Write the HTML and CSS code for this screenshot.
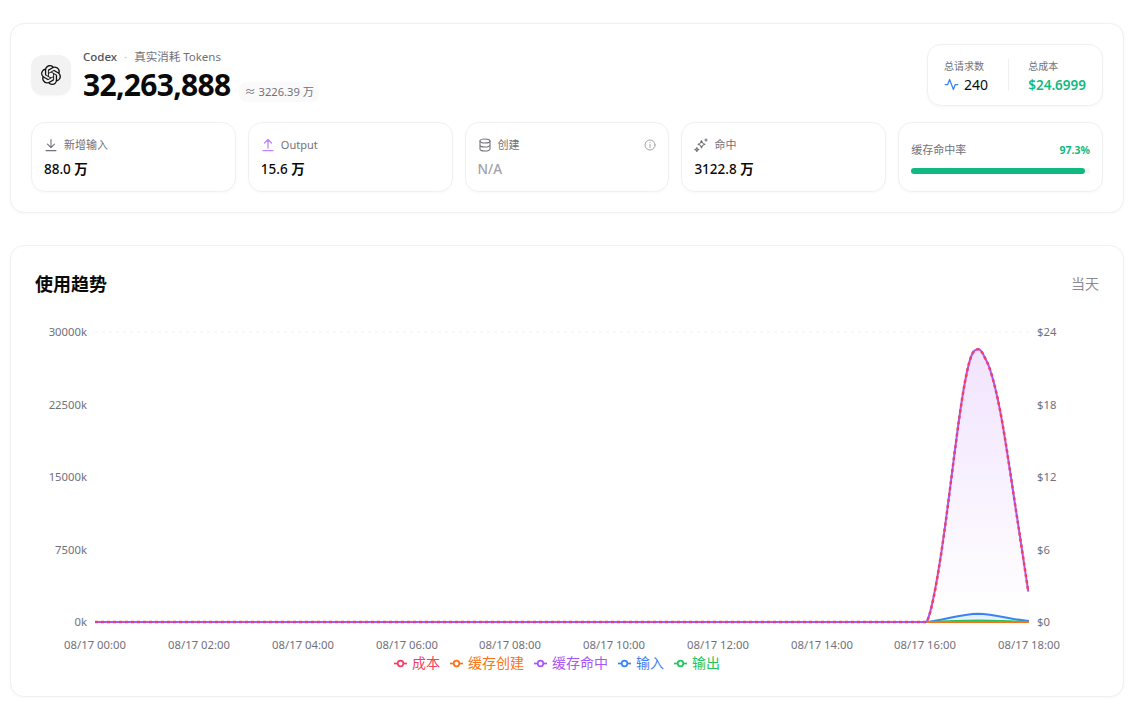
FILE: index.html
```html
<!DOCTYPE html>
<html lang="zh-CN">
<head>
    <meta charset="UTF-8">
    <meta name="viewport" content="width=device-width, initial-scale=1.0">
    <title>Codex 使用统计</title>
    <link rel="stylesheet" href="styles.css">
</head>
<body>

    <section class="card summary">
        <div class="summary-top">
            <div class="brand">
                <div class="brand-icon">
                    <svg width="20" height="20" viewBox="0 0 24 24" fill="#111"><path d="M22.2819 9.8211a5.9847 5.9847 0 0 0-.5157-4.9108 6.0462 6.0462 0 0 0-6.5098-2.9A6.0651 6.0651 0 0 0 4.9807 4.1818a5.9847 5.9847 0 0 0-3.9977 2.9 6.0462 6.0462 0 0 0 .7427 7.0966 5.98 5.98 0 0 0 .511 4.9107 6.051 6.051 0 0 0 6.5146 2.9001A5.9847 5.9847 0 0 0 13.2599 24a6.0557 6.0557 0 0 0 5.7718-4.2058 5.9894 5.9894 0 0 0 3.9977-2.9001 6.0557 6.0557 0 0 0-.7475-7.0729zm-9.022 12.6081a4.4755 4.4755 0 0 1-2.8764-1.0408l.1419-.0804 4.7783-2.7582a.7948.7948 0 0 0 .3927-.6813v-6.7369l2.02 1.1686a.071.071 0 0 1 .038.052v5.5826a4.504 4.504 0 0 1-4.4945 4.4944zm-9.6607-4.1254a4.4708 4.4708 0 0 1-.5346-3.0137l.142.0852 4.783 2.7582a.7712.7712 0 0 0 .7806 0l5.8428-3.3685v2.3324a.0804.0804 0 0 1-.0332.0615L9.74 19.9502a4.4992 4.4992 0 0 1-6.1408-1.6464zM2.3408 7.8956a4.485 4.485 0 0 1 2.3655-1.9728V11.6a.7664.7664 0 0 0 .3879.6765l5.8144 3.3543-2.0201 1.1685a.0757.0757 0 0 1-.071 0l-4.8303-2.7865A4.504 4.504 0 0 1 2.3408 7.872zm16.5963 3.8558L13.1038 8.364 15.1192 7.2a.0757.0757 0 0 1 .071 0l4.8303 2.7913a4.4944 4.4944 0 0 1-.6765 8.1042v-5.6772a.79.79 0 0 0-.407-.667zm2.0107-3.0231l-.142-.0852-4.7735-2.7818a.7759.7759 0 0 0-.7854 0L9.409 9.2297V6.8974a.0662.0662 0 0 1 .0284-.0615l4.8303-2.7866a4.4992 4.4992 0 0 1 6.6802 4.66zM8.3065 12.863l-2.02-1.1638a.0804.0804 0 0 1-.038-.0567V6.0742a4.4992 4.4992 0 0 1 7.3757-3.4537l-.142.0805L8.704 5.459a.7948.7948 0 0 0-.3927.6813zm1.0976-2.3654l2.602-1.4998 2.6069 1.4998v2.9994l-2.5974 1.4997-2.6067-1.4997Z"/></svg>
                </div>
                <div>
                    <div class="brand-line">
                        <span class="brand-name">Codex</span>
                        <span class="brand-dot">·</span>
                        <span>真实消耗 Tokens</span>
                    </div>
                    <div class="total-line">
                        <span class="total">32,263,888</span>
                        <span class="total-pill">≈ 3226.39 万</span>
                    </div>
                </div>
            </div>

            <div class="totals-box">
                <div class="totals-col">
                    <div class="totals-label">总请求数</div>
                    <div class="totals-value">
                        <svg width="15" height="15" viewBox="0 0 24 24" fill="none" stroke="#3b82f6" stroke-width="2" stroke-linecap="round" stroke-linejoin="round"><path d="M2 12h4l3-8 6 16 3-8h4"/></svg>
                        240
                    </div>
                </div>
                <div class="totals-sep"></div>
                <div class="totals-col">
                    <div class="totals-label">总成本</div>
                    <div class="totals-value cost">$24.6999</div>
                </div>
            </div>
        </div>

        <div class="stats">
            <div class="stat">
                <div class="stat-label">
                    <svg class="stat-icon" viewBox="0 0 14 14" fill="none" stroke="#71717a" stroke-width="1.1" stroke-linecap="round" stroke-linejoin="round"><path d="M7 1.5v8M3.5 6.2 7 9.700l3.500-3.500M2 12.600h10"/></svg>
                    <span>新增输入</span>
                </div>
                <div class="stat-value">88.0 <b>万</b></div>
            </div>
            <div class="stat">
                <div class="stat-label">
                    <svg class="stat-icon" viewBox="0 0 14 14" fill="none" stroke="#c084fc" stroke-width="1.3" stroke-linecap="round" stroke-linejoin="round"><path d="M7 10V1.600M3.500 5 7 1.500 10.500 5M2 12.600h10"/></svg>
                    <span>Output</span>
                </div>
                <div class="stat-value">15.6 <b>万</b></div>
            </div>
            <div class="stat">
                <div class="stat-label">
                    <svg class="stat-icon" viewBox="0 0 14 14" fill="none" stroke="#71717a" stroke-width="1.1" stroke-linecap="round" stroke-linejoin="round"><ellipse cx="7" cy="3" rx="5" ry="2"/><path d="M2 3v8c0 1.100 2.200 2 5 2s5-.9 5-2V3M2 7c0 1.100 2.200 2 5 2s5-.9 5-2"/></svg>
                    <span>创建</span>
                    <svg class="stat-info" viewBox="0 0 12 12" fill="none" stroke="#a1a1aa" stroke-width="1" stroke-linecap="round"><circle cx="6" cy="6" r="5"/><path d="M6 5.500v3M6 3.500v.1"/></svg>
                </div>
                <div class="stat-value empty">N/A</div>
            </div>
            <div class="stat">
                <div class="stat-label">
                    <svg class="stat-icon" viewBox="0 0 14 14" fill="none" stroke="#71717a" stroke-width="1.1" stroke-linecap="round" stroke-linejoin="round"><path d="M7.500 2.500c.4 2.400 1.200 3.200 3.500 3.700-2.300.5-3.100 1.300-3.500 3.700-.4-2.400-1.200-3.200-3.500-3.700 2.300-.5 3.100-1.300 3.500-3.700zM12 .8v2.400M10.800 2h2.400M2.800 9.600l.6 1.400 1.400.6-1.400.6-.6 1.400-.6-1.400-1.400-.6 1.400-.6z"/></svg>
                    <span>命中</span>
                </div>
                <div class="stat-value">3122.8 <b>万</b></div>
            </div>
            <div class="stat rate">
                <div class="rate-head">
                    <span>缓存命中率</span>
                    <b>97.3%</b>
                </div>
                <div class="rate-track"><div class="rate-fill" style="width: 97.3%"></div></div>
            </div>
        </div>
    </section>

    <section class="card trend">
        <div class="trend-head">
            <h2>使用趋势</h2>
            <span class="trend-range">当天</span>
        </div>

        <svg class="chart" width="1064" height="336" viewBox="35 320 1064 336">
            <defs>
                <linearGradient id="fadeHit" x1="0" y1="0" x2="0" y2="1">
                    <stop offset="0" stop-color="#a855f7" stop-opacity="0.16"/>
                    <stop offset="1" stop-color="#a855f7" stop-opacity="0"/>
                </linearGradient>
                <linearGradient id="fadeInput" x1="0" y1="0" x2="0" y2="1">
                    <stop offset="0" stop-color="#3b82f6" stop-opacity="0.18"/>
                    <stop offset="1" stop-color="#3b82f6" stop-opacity="0.04"/>
                </linearGradient>
            </defs>

            <path class="grid" d="M95 332H1029"/>

            <g class="axis-y">
                <text x="87" y="336">30000k</text>
                <text x="87" y="409">22500k</text>
                <text x="87" y="481">15000k</text>
                <text x="87" y="554">7500k</text>
                <text x="87" y="626">0k</text>
            </g>
            <g class="axis-y2">
                <text x="1037" y="336">$24</text>
                <text x="1037" y="409">$18</text>
                <text x="1037" y="481">$12</text>
                <text x="1037" y="554">$6</text>
                <text x="1037" y="626">$0</text>
            </g>
            <g class="axis-x">
                <text x="95" y="649">08/17 00:00</text>
                <text x="199" y="649">08/17 02:00</text>
                <text x="303" y="649">08/17 04:00</text>
                <text x="407" y="649">08/17 06:00</text>
                <text x="510" y="649">08/17 08:00</text>
                <text x="614" y="649">08/17 10:00</text>
                <text x="718" y="649">08/17 12:00</text>
                <text x="822" y="649">08/17 14:00</text>
                <text x="925" y="649">08/17 16:00</text>
                <text x="1029" y="649">08/17 18:00</text>
            </g>

            <!-- 缓存命中 area -->
            <path fill="url(#fadeHit)" d="M926.700 622C931.700 612 936.700 583 941.700 550C947.100 514 952.600 467 958 427C962.600 393 967.100 366 971.700 355C973.900 350 976.100 349.300 978.300 349.300C980.500 349.300 982.800 353 985 358C990 366 995 385 1000 410C1005.600 439 1011.100 479 1016.700 515C1020.600 540 1024.400 566 1028.300 591.700V622Z"/>
            <!-- 输入 area -->
            <path fill="url(#fadeInput)" d="M926.700 622C945 620 960 614 978 613.700C996 614 1012 620 1029 621V622Z"/>

            <path class="line line-hit" d="M95 622H926.700C931.700 612 936.700 583 941.700 550C947.100 514 952.600 467 958 427C962.600 393 967.100 366 971.700 355C973.900 350 976.100 349.300 978.300 349.300C980.500 349.300 982.800 353 985 358C990 366 995 385 1000 410C1005.600 439 1011.100 479 1016.700 515C1020.600 540 1024.400 566 1028.300 591.700"/>
            <path class="line line-input" d="M926.700 622C945 620 960 614 978 613.700C996 614 1012 620 1029 621"/>
            <path class="line line-output" d="M926.700 622C945 621.500 960 620.600 978 620.400C996 620.600 1012 621.500 1029 622"/>
            <path class="line line-create" d="M926.700 622H1029"/>
            <path class="line line-cost" d="M95 622H926.700C931.700 612 936.700 583 941.700 550C947.100 514 952.600 467 958 427C962.600 393 967.100 366 971.700 355C973.900 350 976.100 349.300 978.300 349.300C980.500 349.300 982.800 353 985 358C990 366 995 385 1000 410C1005.600 439 1011.100 479 1016.700 515C1020.600 540 1024.400 566 1028.300 591.700"/>
        </svg>

        <div class="legend">
            <span class="legend-item c-cost"><svg width="13" height="9"><path d="M0 4.500h13"/><circle cx="6.500" cy="4.500" r="2.800"/></svg>成本</span>
            <span class="legend-item c-create"><svg width="13" height="9"><path d="M0 4.500h13"/><circle cx="6.500" cy="4.500" r="2.800"/></svg>缓存创建</span>
            <span class="legend-item c-hit"><svg width="13" height="9"><path d="M0 4.500h13"/><circle cx="6.500" cy="4.500" r="2.800"/></svg>缓存命中</span>
            <span class="legend-item c-input"><svg width="13" height="9"><path d="M0 4.500h13"/><circle cx="6.500" cy="4.500" r="2.800"/></svg>输入</span>
            <span class="legend-item c-output"><svg width="13" height="9"><path d="M0 4.500h13"/><circle cx="6.500" cy="4.500" r="2.800"/></svg>输出</span>
        </div>
    </section>

</body>
</html>
```

FILE: styles.css
```css
* {
    box-sizing: border-box;
}
body {
    margin: 0;
    padding: 23px 20px 16px 10px;
    background: #fff;
    color: #0a0a0a;
    font-family: "Noto Sans", "Noto Sans CJK SC", sans-serif;
}
.card {
    background: #fff;
    border: 1px solid #f0f0f2;
    border-radius: 14px;
    box-shadow: 0 1px 3px rgba(0, 0, 0, 0.03);
}
.summary {
    height: 190px;
    padding: 20px;
}
.summary-top {
    display: flex;
    justify-content: space-between;
    height: 78px;
}
.brand {
    display: flex;
    align-items: center;
    gap: 12px;
    height: 62px;
}
.brand-icon {
    display: flex;
    align-items: center;
    justify-content: center;
    width: 40px;
    height: 40px;
    background: #f2f2f3;
    border-radius: 12px;
    box-shadow: 0 1px 2px rgba(0, 0, 0, 0.04);
}
.brand-line {
    display: flex;
    gap: 7px;
    padding-top: 1px;
    font-size: 11.5px;
    line-height: 16px;
    color: #71717a;
}
.brand-name {
    color: #52525b;
    font-weight: 500;
}
.brand-dot {
    color: #c4c4c8;
}
.total-line {
    display: flex;
    align-items: flex-end;
    gap: 9px;
    margin-top: 2px;
}
.total {
    font-size: 30px;
    line-height: 36px;
    font-weight: 700;
    letter-spacing: -0.7px;
}
.total-pill {
    padding: 0 5px;
    margin-bottom: 1px;
    font-size: 11.2px;
    line-height: 20px;
    color: #71717a;
    background: #fafafa;
    border-radius: 7px;
}
.totals-box {
    display: flex;
    align-items: center;
    width: 176px;
    height: 62px;
    padding: 0 16px;
    border: 1px solid #f0f0f2;
    border-radius: 14px;
    box-shadow: 0 1px 3px rgba(0, 0, 0, 0.04);
}
.totals-label {
    font-size: 10px;
    line-height: 14px;
    margin-top: 2px;
    color: #71717a;
}
.totals-value {
    display: flex;
    align-items: center;
    gap: 5px;
    margin-top: 3px;
    font-size: 14px;
    line-height: 18px;
}
.totals-value.cost {
    color: #10b981;
    font-size: 13.5px;
    font-weight: 600;
}
.totals-sep {
    width: 1px;
    height: 32px;
    margin: 0 20px;
    background: #f0f0f2;
}
.stats {
    display: grid;
    grid-template-columns: repeat(5, 1fr);
    gap: 12px;
}
.stat {
    height: 70px;
    padding: 14px 12px;
    border: 1px solid #f0f0f2;
    border-radius: 14px;
    box-shadow: 0 1px 3px rgba(0, 0, 0, 0.03);
}
.stat-label {
    display: flex;
    align-items: center;
    gap: 6px;
    font-size: 11px;
    line-height: 16px;
    color: #71717a;
}
.stat-icon {
    width: 14px;
    height: 14px;
}
.stat-info {
    width: 12px;
    height: 12px;
    margin-left: auto;
}
.stat-value {
    margin-top: 7px;
    font-size: 13.5px;
    line-height: 18px;
    font-weight: 500;
}
.stat-value b {
    font-weight: 700;
}
.stat-value.empty {
    color: #a1a1aa;
}
.rate {
    padding-top: 19px;
}
.rate-head {
    display: flex;
    justify-content: space-between;
    align-items: center;
    font-size: 11px;
    line-height: 16px;
    color: #71717a;
}
.rate-head b {
    font-size: 10.5px;
    color: #10b981;
}
.rate-track {
    height: 6px;
    margin-top: 10px;
    background: #f4f4f5;
    border-radius: 3px;
}
.rate-fill {
    height: 100%;
    background: #10b981;
    border-radius: 3px;
}
.trend {
    height: 452px;
    margin-top: 32px;
    padding: 22px 24px 0;
}
.trend-head {
    display: flex;
    justify-content: space-between;
    align-items: center;
    height: 30px;
}
.trend-head h2 {
    margin: 0;
    font-size: 18px;
    font-weight: 700;
}
.trend-range {
    font-size: 14px;
    color: #8a8a92;
}
.chart {
    display: block;
    margin-top: 22px;
}
.chart text {
    font-size: 11.3px;
    fill: #71717a;
}
.axis-y text {
    text-anchor: end;
}
.axis-x text {
    text-anchor: middle;
}
.grid {
    stroke: #f0f0f2;
    stroke-dasharray: 3 4;
    fill: none;
}
.line {
    fill: none;
    stroke-width: 2;
}
.line-hit {
    stroke: #a855f7;
}
.line-input {
    stroke: #3b82f6;
}
.line-output {
    stroke: #22c55e;
}
.line-create {
    stroke: #f97316;
}
.line-cost {
    stroke: #f43f5e;
    stroke-width: 2.5;
    stroke-dasharray: 3 3;
}
.legend {
    display: flex;
    justify-content: center;
    gap: 10px;
    margin: -3px 20px 0 0;
    font-size: 14px;
    line-height: 20px;
}
.legend-item {
    display: flex;
    align-items: center;
    gap: 5px;
}
.legend-item svg {
    fill: #fff;
    stroke: currentColor;
    stroke-width: 1.7;
}
.c-cost { color: #f43f5e; }
.c-create { color: #f97316; }
.c-hit { color: #a855f7; }
.c-input { color: #3b82f6; }
.c-output { color: #22c55e; }
```
